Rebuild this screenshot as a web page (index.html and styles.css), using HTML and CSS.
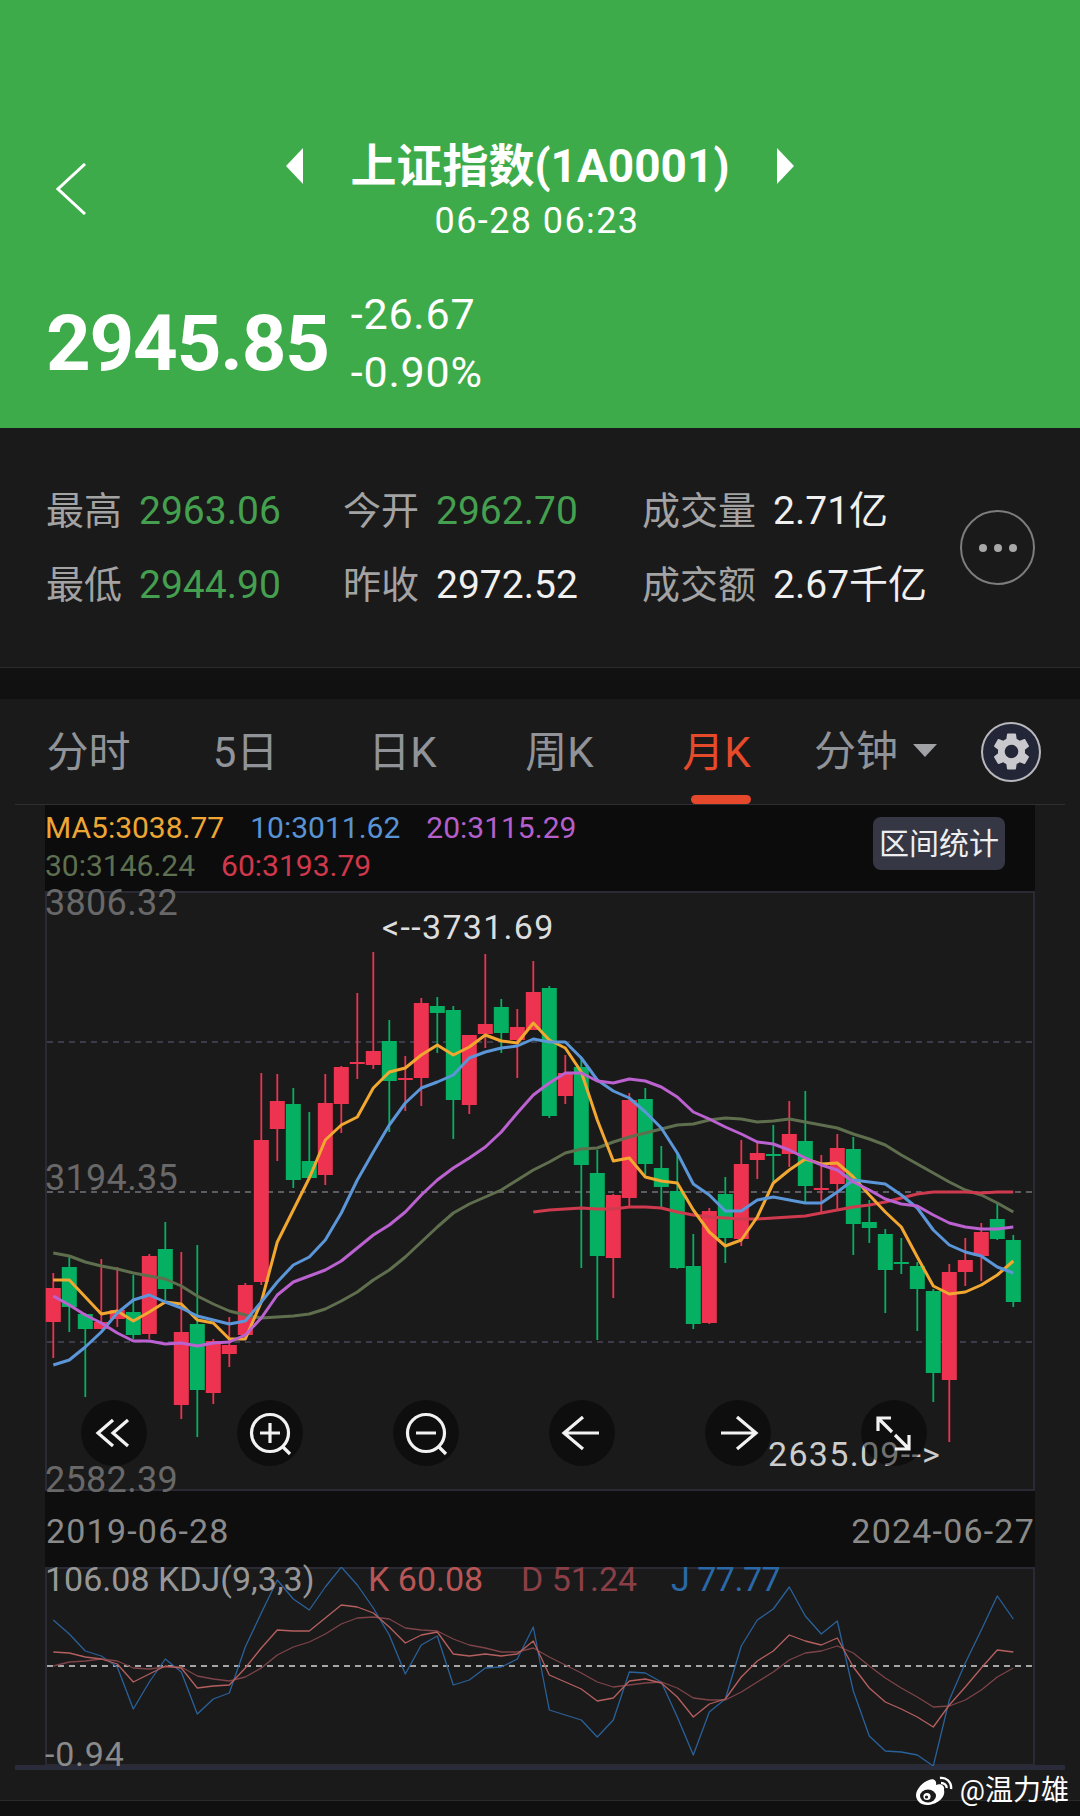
FILE: index.html
```html
<!DOCTYPE html>
<html lang="zh-CN">
<head>
    <meta charset="UTF-8">
    <meta name="viewport" content="width=device-width, initial-scale=1.0">
    <title>上证指数(1A0001)</title>
    <link rel="stylesheet" href="styles.css">
</head>
<body>
    <header class="head">
        <div class="head-top">
            <svg class="back" viewBox="0 0 30 52"><path d="M29 1 L2 26 L29 51"/></svg>
            <div class="head-center">
                <div class="title-row">
                    <svg class="title-arrow" viewBox="0 0 17 36"><path d="M17 0 V36 L0 18Z"/></svg>
                    <h1 class="title">上证指数(1A0001)</h1>
                    <svg class="title-arrow" viewBox="0 0 17 36"><path d="M0 0 V36 L17 18Z"/></svg>
                </div>
                <div class="head-date">06-28 06:23</div>
            </div>
        </div>
        <div class="price-row">
            <div class="price">2945.85</div>
            <div class="change">
                <div>-26.67</div>
                <div>-0.90%</div>
            </div>
        </div>
    </header>

    <section class="stats">
        <div class="stats-grid">
            <div class="stat"><span class="stat-label">最高</span><span class="val-green">2963.06</span></div>
            <div class="stat"><span class="stat-label">今开</span><span class="val-green">2962.70</span></div>
            <div class="stat"><span class="stat-label">成交量</span><span class="val">2.71亿</span></div>
            <div class="stat"><span class="stat-label">最低</span><span class="val-green">2944.90</span></div>
            <div class="stat"><span class="stat-label">昨收</span><span class="val">2972.52</span></div>
            <div class="stat"><span class="stat-label">成交额</span><span class="val">2.67千亿</span></div>
        </div>
        <div class="more"><i></i><i></i><i></i></div>
    </section>
    <div class="strip"></div>

    <nav class="tabs">
        <div class="tab">分时</div>
        <div class="tab">5日</div>
        <div class="tab">日K</div>
        <div class="tab">周K</div>
        <div class="tab active">月K</div>
        <div class="tab-drop">分钟<span class="caret"></span></div>
        <div class="gear">
            <svg viewBox="0 0 24 24"><path d="M19.14 12.94c.04-.3.06-.61.06-.94 0-.32-.02-.64-.07-.94l2.03-1.58c.18-.14.23-.41.12-.61l-1.92-3.32c-.12-.22-.37-.29-.59-.22l-2.39.96c-.5-.38-1.03-.7-1.62-.94l-.36-2.54c-.04-.24-.24-.41-.48-.41h-3.84c-.24 0-.43.17-.47.41l-.36 2.54c-.59.24-1.13.57-1.62.94l-2.39-.96c-.22-.08-.47 0-.59.22L2.74 8.87c-.12.21-.08.47.12.61l2.03 1.58c-.05.3-.09.63-.09.94s.02.64.07.94l-2.03 1.58c-.18.14-.23.41-.12.61l1.92 3.32c.12.22.37.29.59.22l2.39-.96c.5.38 1.03.7 1.62.94l.36 2.54c.05.24.24.41.48.41h3.84c.24 0 .44-.17.47-.41l.36-2.54c.59-.24 1.13-.56 1.62-.94l2.39.96c.22.08.47 0 .59-.22l1.92-3.32c.12-.22.07-.47-.12-.61l-2.01-1.58zM12 15.6c-1.98 0-3.6-1.62-3.6-3.6s1.62-3.6 3.6-3.6 3.6 1.62 3.6 3.6-1.62 3.6-3.6 3.6z"/></svg>
        </div>
    </nav>

    <div class="legend">
        <div class="legend-rows">
            <div class="legend-row">
                <span class="ma5">MA5:3038.77</span>
                <span class="ma10">10:3011.62</span>
                <span class="ma20">20:3115.29</span>
            </div>
            <div class="legend-row">
                <span class="ma30">30:3146.24</span>
                <span class="ma60">60:3193.79</span>
            </div>
        </div>
        <div class="range-btn">区间统计</div>
    </div>

    <div class="chart-main">
        <svg id="kline" class="chart-svg" viewBox="45 891 990 600"></svg>
        <div class="axis axis-high">3806.32</div>
        <div class="axis axis-mid">3194.35</div>
        <div class="axis axis-low">2582.39</div>
        <div class="mark mark-high">&lt;--3731.69</div>
        <div class="mark mark-low">2635.09--&gt;</div>
        <div class="tools">
            <div class="tool"><svg viewBox="0 0 66 66"><path d="M32 20 L17 33 L32 46 M47 20 L32 33 L47 46"/></svg></div>
            <div class="tool"><svg viewBox="0 0 66 66"><circle cx="33" cy="33" r="18.5"/><path d="M23 33 H43 M33 23 V43 M46 47 L53 54"/></svg></div>
            <div class="tool"><svg viewBox="0 0 66 66"><circle cx="33" cy="33" r="18.5"/><path d="M23 33 H43 M46 47 L53 54"/></svg></div>
            <div class="tool"><svg viewBox="0 0 66 66"><path d="M50 33 H15 M34 17 L15 33 L34 49"/></svg></div>
            <div class="tool"><svg viewBox="0 0 66 66"><path d="M16 33 H51 M32 17 L51 33 L32 49"/></svg></div>
            <div class="tool"><svg viewBox="0 0 66 66"><path d="M17 31 V18 H30 M17 18 L31 32 M48 35 V49 H34 M48 49 L34 35"/></svg></div>
        </div>
    </div>

    <div class="dates">
        <span>2019-06-28</span>
        <span>2024-06-27</span>
    </div>

    <div class="chart-kdj">
        <svg id="kdj" class="chart-svg" viewBox="45 1567 990 199"></svg>
        <div class="kdj-legend">
            <span class="kdj-name">106.08 KDJ(9,3,3)</span>
            <span class="kdj-k">K 60.08</span>
            <span class="kdj-d">D 51.24</span>
            <span class="kdj-j">J 77.77</span>
        </div>
        <div class="axis kdj-low">-0.94</div>
    </div>
    <div class="chart-end"></div>

    <footer class="foot">
        <div class="mark-weibo">
            <svg class="weibo" viewBox="0 0 37 31">
                <path class="weibo-body" d="M0 20 C0 14 7 7 13 5 C18 3 21 6 20 10 C25 8 29 11 28 15 C30 23 20 30 11 30 C5 30 0 26 0 20Z"/>
                <ellipse class="weibo-eye" cx="12" cy="21" rx="8" ry="6.5"/>
                <circle class="weibo-body" cx="11" cy="21.5" r="3.6"/>
                <circle class="weibo-eye" cx="10.5" cy="22" r="1.6"/>
                <path class="weibo-wave" d="M24 3 C30 2 36 7 35 14 M25 8 C28 8 31 10 30.5 13"/>
            </svg>
            <span>@温力雄</span>
        </div>
    </footer>
    <div class="foot-strip"></div>

    <script src="chart.js"></script>
</body>
</html>
```

FILE: styles.css
```css
* {
    box-sizing: border-box;
}
body {
    font-family: Roboto, "Noto Sans CJK SC", sans-serif;
    margin: 0;
    width: 1080px;
    height: 1816px;
    overflow: hidden;
    background-color: #1a1a1b;
    color: #eee;
}

/* cabecera verde */
.head {
    height: 428px;
    padding-top: 136px;
    background-color: #3eab4a;
    color: #fff;
}
.head-top {
    display: grid;
    grid-template-columns: 1fr auto 1fr;
    align-items: center;
}
.back {
    width: 30px;
    height: 52px;
    margin-left: 56px;
    fill: none;
    stroke: #fff;
    stroke-width: 3;
}
.title-row {
    display: flex;
    align-items: center;
    gap: 47px;
    height: 60px;
}
.title-arrow {
    width: 17px;
    height: 36px;
    fill: #fff;
}
.title {
    margin: 0;
    font-size: 46px;
    font-weight: 700;
    line-height: 60px;
}
.head-date {
    margin-top: 5px;
    padding-right: 6px;
    font-size: 36px;
    line-height: 40px;
    text-align: center;
    letter-spacing: 1.4px;
}
.price-row {
    display: flex;
    align-items: center;
    gap: 22px;
    margin-top: 44px;
    padding-left: 46px;
}
.price {
    font-size: 78px;
    font-weight: 700;
    letter-spacing: -1.2px;
}
.change {
    font-size: 43px;
    line-height: 58px;
    letter-spacing: 0.8px;
}

/* datos del dia */
.stats {
    display: flex;
    align-items: flex-start;
    justify-content: space-between;
    height: 240px;
    padding: 46px 45px 0 46px;
    border-bottom: 1px solid #2b2b2d;
}
.stats-grid {
    display: grid;
    grid-template-columns: 297px 299px auto;
    grid-auto-rows: 74px;
    font-size: 39px;
    line-height: 74px;
}
.stat {
    display: flex;
    align-items: baseline;
    gap: 17px;
}
.stat-label {
    color: #a3a3a3;
    font-size: 38px;
}
.val {
    color: #f0f0f0;
}
.val-green {
    color: #44a04e;
}
.more {
    display: flex;
    align-items: center;
    justify-content: center;
    gap: 7px;
    width: 75px;
    height: 75px;
    margin-top: 36px;
    border: 2px solid #7d7d7d;
    border-radius: 50%;
}
.more i {
    width: 8px;
    height: 8px;
    border-radius: 50%;
    background-color: #a8a8a8;
}
.strip {
    height: 31px;
    background-color: #111;
}

/* pestañas */
.tabs {
    display: flex;
    height: 106px;
    margin: 0 15px;
    border-bottom: 1px solid #2e2e33;
    color: #909398;
    font-size: 42px;
    line-height: 107px;
}
.tab {
    position: relative;
    width: 157px;
    text-align: center;
}
.tab:first-child {
    margin-left: -5px;
}
.tab.active {
    color: #e54a2a;
}
.tab.active::after {
    content: "";
    position: absolute;
    left: 53px;
    bottom: 0;
    width: 60px;
    height: 9px;
    border-radius: 5px;
    background-color: #e5482a;
}
.tab-drop {
    display: flex;
    align-items: center;
    margin-left: 19px;
}
.caret {
    width: 0;
    height: 0;
    margin: -2px 0 0 15px;
    border-left: 12px solid transparent;
    border-right: 12px solid transparent;
    border-top: 13px solid #a0a2a6;
}
.gear {
    display: flex;
    align-items: center;
    justify-content: center;
    align-self: center;
    width: 60px;
    height: 60px;
    margin-left: auto;
    margin-right: 24px;
    border: 2px solid #b8b8bc;
    border-radius: 50%;
    background-color: #232636;
}
.gear svg {
    width: 45px;
    height: 45px;
    fill: #c9c9cd;
}

/* leyenda de medias */
.legend {
    display: flex;
    justify-content: space-between;
    height: 86px;
    margin: 0 45px;
    padding: 4px 30px 0 0;
    background-color: #0c0c0c;
    font-size: 30px;
    line-height: 38px;
}
.legend-row {
    display: flex;
    gap: 26px;
}
.ma5 { color: #eea734; }
.ma10 { color: #5a93d3; }
.ma20 { color: #b45fcb; }
.ma30 { color: #5e7050; }
.ma60 { color: #d0384c; }
.range-btn {
    height: 53px;
    margin-top: 8px;
    padding: 0 6px;
    border-radius: 8px;
    background-color: #353745;
    color: #eee;
    font-size: 30px;
    line-height: 53px;
}

/* graficos */
.chart-main,
.chart-kdj {
    position: relative;
    margin: 0 45px;
    box-shadow: inset 0 0 0 2px #292a34;
}
.chart-main {
    height: 600px;
}
.chart-kdj {
    height: 199px;
}
.chart-svg {
    position: absolute;
    left: 0;
    top: 0;
    width: 100%;
    height: 100%;
}
.axis,
.mark {
    position: absolute;
    left: 0;
    font-size: 36px;
    letter-spacing: 0.3px;
    line-height: 40px;
    color: #686868;
    white-space: nowrap;
}
.axis-high { top: -8px; }
.axis-mid { top: 267px; }
.axis-low { top: 569px; }
.mark {
    font-size: 34px;
    letter-spacing: 1.3px;
    color: #ddd;
}
.mark-high {
    left: 337px;
    top: 16px;
}
.mark-low {
    left: 723px;
    top: 543px;
    color: #ccc;
}
.tools {
    position: absolute;
    left: 36px;
    top: 509px;
    display: flex;
    gap: 90px;
}
.tool {
    width: 66px;
    height: 66px;
    border-radius: 50%;
    background-color: rgba(0, 0, 0, 0.45);
}
.tool svg {
    display: block;
    width: 66px;
    height: 66px;
    fill: none;
    stroke: #f2f2f2;
    stroke-width: 3.2;
}
.dates {
    display: flex;
    justify-content: space-between;
    height: 76px;
    margin: 0 45px;
    padding: 0 0 0 1px;
    background-color: #0e0e0e;
    color: #8a8a8a;
    font-size: 34px;
    letter-spacing: 1.2px;
    line-height: 80px;
}
.kdj-legend {
    position: absolute;
    left: 0;
    top: -8px;
    display: flex;
    font-size: 34px;
    line-height: 40px;
    white-space: nowrap;
}
.kdj-name {
    width: 323px;
    color: #979797;
}
.kdj-k {
    width: 153px;
    color: #b85656;
}
.kdj-d {
    width: 150px;
    color: #8a3f46;
}
.kdj-j {
    letter-spacing: -0.5px;
    color: #2a69a8;
}
.kdj-low {
    top: 167px;
    font-size: 34px;
    letter-spacing: 0.8px;
    color: #8a8a8a;
}
.chart-end {
    height: 5px;
    margin: -1px 15px 0;
    background-color: #292b3a;
}

/* pie */
.foot {
    position: relative;
    height: 31px;
    border-bottom: 1px solid #2a2a2a;
}
.foot-strip {
    height: 15px;
    background-color: #101010;
}
.mark-weibo {
    position: absolute;
    right: 11px;
    top: 5px;
    display: flex;
    align-items: center;
    gap: 7px;
    color: #fff;
    font-size: 28px;
    line-height: 31px;
}
.weibo {
    width: 37px;
    height: 31px;
}
.weibo-body { fill: #fff; }
.weibo-eye { fill: #1a1a1b; }
.weibo-wave {
    fill: none;
    stroke: #fff;
    stroke-width: 2.4;
}
```

FILE: chart.js
```javascript
// [high, bodyTop, bodyBottom, low, color], one candle per month, in page pixels
const candles = [
    [1273, 1288, 1322, 1358, 'r'], [1257, 1267, 1307, 1332, 'g'], [1313, 1314, 1329, 1397, 'g'],
    [1259, 1322, 1329, 1329, 'r'], [1267, 1310, 1319, 1327, 'r'], [1275, 1312, 1335, 1339, 'g'],
    [1254, 1256, 1334, 1339, 'r'], [1222, 1249, 1289, 1300, 'g'], [1252, 1332, 1405, 1419, 'r'],
    [1245, 1324, 1390, 1437, 'g'], [1339, 1341, 1393, 1404, 'r'], [1317, 1345, 1354, 1367, 'r'],
    [1283, 1285, 1335, 1335, 'r'], [1073, 1140, 1282, 1285, 'r'], [1074, 1101, 1129, 1161, 'r'],
    [1088, 1104, 1180, 1188, 'g'], [1112, 1161, 1178, 1178, 'g'], [1074, 1103, 1175, 1185, 'r'],
    [1066, 1067, 1104, 1133, 'r'], [993, 1062, 1064, 1079, 'r'], [952, 1051, 1065, 1069, 'r'],
    [1020, 1041, 1081, 1132, 'g'], [1056, 1078, 1080, 1111, 'r'], [998, 1003, 1078, 1106, 'r'],
    [997, 1006, 1013, 1053, 'g'], [1006, 1010, 1100, 1139, 'g'], [1035, 1035, 1105, 1114, 'r'],
    [954, 1024, 1034, 1048, 'r'], [999, 1007, 1033, 1053, 'g'], [1009, 1027, 1040, 1078, 'r'],
    [961, 992, 1030, 1030, 'r'], [986, 988, 1116, 1118, 'g'], [1055, 1073, 1096, 1104, 'r'],
    [1058, 1067, 1165, 1268, 'g'], [1150, 1173, 1256, 1340, 'g'], [1194, 1195, 1258, 1298, 'r'],
    [1093, 1100, 1198, 1206, 'r'], [1088, 1099, 1164, 1175, 'g'], [1146, 1168, 1187, 1207, 'g'],
    [1153, 1191, 1268, 1269, 'g'], [1234, 1266, 1324, 1329, 'g'], [1208, 1211, 1323, 1324, 'r'],
    [1177, 1194, 1238, 1263, 'g'], [1140, 1164, 1239, 1246, 'r'], [1143, 1153, 1160, 1179, 'r'],
    [1125, 1154, 1156, 1181, 'g'], [1101, 1134, 1154, 1167, 'r'], [1091, 1141, 1186, 1202, 'g'],
    [1155, 1188, 1190, 1212, 'r'], [1134, 1148, 1184, 1209, 'r'], [1137, 1149, 1224, 1255, 'g'],
    [1200, 1222, 1228, 1243, 'g'], [1229, 1234, 1270, 1313, 'g'], [1238, 1262, 1264, 1274, 'g'],
    [1262, 1266, 1289, 1331, 'g'], [1289, 1291, 1373, 1402, 'g'], [1264, 1272, 1380, 1442, 'r'],
    [1238, 1260, 1272, 1286, 'r'], [1223, 1232, 1256, 1281, 'r'], [1202, 1219, 1239, 1240, 'g'],
    [1235, 1240, 1302, 1307, 'g']
];

const ma5 = [1280, 1280, 1297, 1314, 1311, 1321, 1312, 1302, 1304, 1320, 1323, 1339, 1339, 1302, 1242, 1210, 1178, 1140, 1125, 1117, 1088, 1072, 1068, 1055, 1045, 1055, 1047, 1035, 1041, 1043, 1023, 1040, 1048, 1072, 1120, 1161, 1158, 1177, 1181, 1183, 1210, 1232, 1246, 1240, 1217, 1183, 1170, 1159, 1164, 1163, 1177, 1195, 1212, 1227, 1257, 1286, 1294, 1292, 1285, 1275, 1261];
const ma10 = [1365, 1360, 1347, 1332, 1313, 1300, 1295, 1302, 1308, 1316, 1320, 1324, 1321, 1302, 1282, 1265, 1257, 1240, 1213, 1180, 1152, 1125, 1103, 1088, 1082, 1075, 1058, 1052, 1048, 1046, 1039, 1042, 1042, 1058, 1080, 1091, 1098, 1112, 1128, 1153, 1184, 1195, 1211, 1211, 1200, 1197, 1200, 1203, 1203, 1192, 1180, 1182, 1184, 1195, 1208, 1230, 1245, 1252, 1256, 1267, 1273];
const ma20 = [1296, 1305, 1315, 1323, 1333, 1341, 1341, 1344, 1343, 1346, 1343, 1342, 1335, 1318, 1295, 1282, 1276, 1270, 1261, 1248, 1235, 1225, 1212, 1195, 1180, 1168, 1158, 1147, 1132, 1113, 1095, 1083, 1073, 1073, 1081, 1083, 1079, 1081, 1087, 1097, 1112, 1119, 1127, 1134, 1142, 1144, 1150, 1158, 1165, 1170, 1182, 1190, 1199, 1204, 1206, 1215, 1223, 1227, 1229, 1229, 1227];
const ma30 = [1253, 1256, 1262, 1266, 1269, 1273, 1276, 1279, 1286, 1296, 1304, 1311, 1315, 1318, 1317, 1316, 1314, 1309, 1301, 1292, 1280, 1270, 1257, 1242, 1227, 1213, 1204, 1197, 1190, 1180, 1170, 1162, 1153, 1149, 1148, 1142, 1137, 1133, 1129, 1125, 1124, 1120, 1118, 1119, 1122, 1121, 1119, 1122, 1125, 1128, 1134, 1139, 1145, 1155, 1164, 1173, 1182, 1190, 1195, 1203, 1212];
// la de 60 meses solo empieza en la vela 30
const ma60 = [1212, 1210, 1209, 1208, 1209, 1209, 1207, 1207, 1208, 1212, 1215, 1217, 1218, 1219, 1219, 1218, 1217, 1216, 1213, 1210, 1207, 1205, 1202, 1198, 1194, 1192, 1192, 1192, 1193, 1192, 1192];

const kdjJ = [1620, 1634, 1651, 1656, 1667, 1709, 1682, 1659, 1672, 1714, 1699, 1693, 1647, 1613, 1580, 1599, 1610, 1587, 1567, 1585, 1608, 1635, 1674, 1645, 1636, 1685, 1680, 1668, 1667, 1659, 1627, 1710, 1715, 1720, 1737, 1720, 1672, 1673, 1682, 1717, 1755, 1712, 1699, 1646, 1620, 1609, 1587, 1616, 1634, 1621, 1691, 1736, 1751, 1752, 1755, 1766, 1700, 1663, 1630, 1596, 1619];
const kdjK = [1652, 1653, 1657, 1659, 1664, 1682, 1674, 1666, 1668, 1688, 1686, 1685, 1668, 1648, 1630, 1631, 1631, 1618, 1605, 1607, 1613, 1627, 1643, 1635, 1632, 1654, 1656, 1654, 1656, 1654, 1641, 1675, 1682, 1689, 1701, 1698, 1681, 1679, 1683, 1697, 1717, 1704, 1699, 1677, 1661, 1651, 1635, 1641, 1645, 1638, 1667, 1688, 1702, 1709, 1717, 1727, 1705, 1687, 1668, 1650, 1652];
const kdjD = [1666, 1662, 1661, 1659, 1661, 1668, 1669, 1667, 1667, 1676, 1679, 1681, 1677, 1668, 1655, 1647, 1642, 1634, 1624, 1618, 1617, 1619, 1628, 1630, 1631, 1639, 1645, 1648, 1652, 1652, 1648, 1657, 1665, 1673, 1682, 1687, 1685, 1683, 1682, 1688, 1698, 1700, 1700, 1692, 1682, 1672, 1660, 1653, 1651, 1646, 1653, 1666, 1678, 1688, 1697, 1707, 1706, 1700, 1690, 1677, 1668];

const FIRST_X = 53.3;
const STEP = 16;
const CANDLE_COLOR = { r: '#ee3350', g: '#06b062' };

function xOf(i) {
    return FIRST_X + STEP * i;
}

function polyline(values, color, width, start) {
    let points = values.map((y, i) => xOf(i + (start || 0)).toFixed(1) + ',' + y).join(' ');
    return `<polyline points="${points}" fill="none" stroke="${color}" stroke-width="${width}" stroke-linejoin="round"/>`;
}

function dashLine(y, color) {
    return `<line x1="47" x2="1033" y1="${y}" y2="${y}" stroke="${color}" stroke-width="2" stroke-dasharray="6 5"/>`;
}

let kline = dashLine(1042, '#3b3b4a') + dashLine(1192, '#5c5c62') + dashLine(1342, '#3b3b4a');

candles.forEach((c, i) => {
    let x = xOf(i);
    let color = CANDLE_COLOR[c[4]];
    kline += `<line x1="${x}" x2="${x}" y1="${c[0]}" y2="${c[3]}" stroke="${color}" stroke-width="1.8"/>`;
    kline += `<rect x="${x - 7.5}" y="${c[1]}" width="15" height="${c[2] - c[1]}" fill="${color}"/>`;
});

kline += polyline(ma30, '#5f6f4e', 3);
kline += polyline(ma60, '#cf3a4e', 3, 30);
kline += polyline(ma5, '#f2a830', 3);
kline += polyline(ma10, '#5b96d8', 3);
kline += polyline(ma20, '#bb62d0', 3);
document.getElementById('kline').innerHTML = kline;

document.getElementById('kdj').innerHTML =
    dashLine(1666, '#a6a6a6') +
    polyline(kdjJ, '#2a6199', 1.3) +
    polyline(kdjD, '#7e4448', 1.3) +
    polyline(kdjK, '#b5605f', 1.3);
```
